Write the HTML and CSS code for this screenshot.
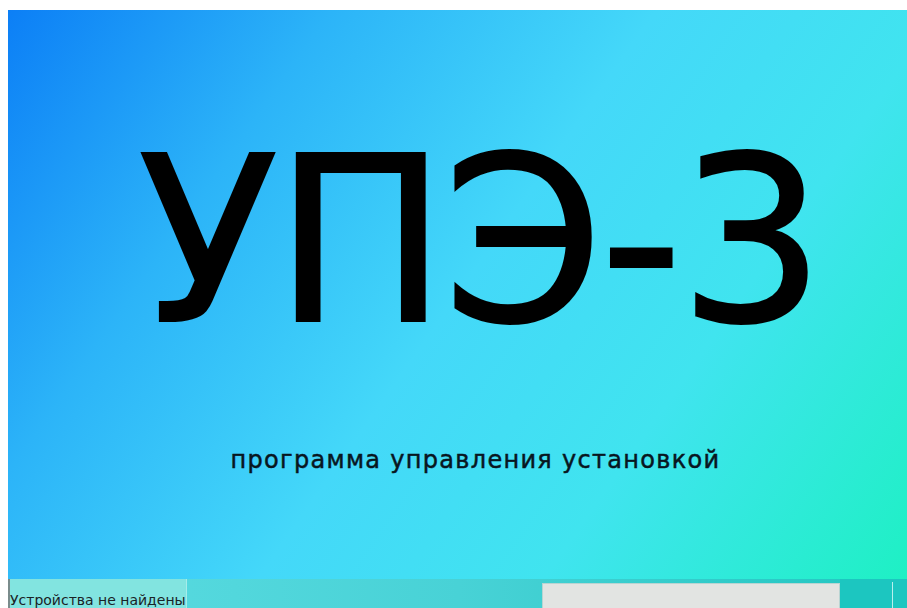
FILE: index.html
```html
<!DOCTYPE html>
<html lang="ru">
<head>
<meta charset="utf-8">
<title>УПЭ-3</title>
<link rel="stylesheet" href="styles.css">
</head>
<body>
<div class="window">
  <main class="splash">
    <h1 class="title">УПЭ-3</h1>
    <p class="subtitle">программа управления установкой</p>
  </main>
  <footer class="statusbar">
    <div class="status-label">Устройства не найдены</div>
    <div class="status-fill"></div>
    <div class="progress"></div>
    <div class="status-end"><span class="grip"></span></div>
  </footer>
</div>
</body>
</html>
```
FILE: styles.css
```css
html, body {
  margin: 0;
  padding: 0;
  background: #ffffff;
  overflow: hidden;
}

body {
  padding: 10px 0 0 8px;
  height: 608px;
  box-sizing: border-box;
}

.window {
  height: 598px;
  display: flex;
  flex-direction: column;
  overflow: hidden;
  font-family: "DejaVu Sans", "Liberation Sans", sans-serif;
}

.splash {
  flex: 0 0 569px;
  display: flex;
  flex-direction: column;
  align-items: center;
  background:
    linear-gradient(125deg, #0c7ff6 0%, #2cb4f8 25%, #44d8f9 50%, #40e4ef 72%, #1ef0c4 100%);
}

.title {
  margin: 117px 0 0 44px;
  font-weight: normal;
  font-size: 230px;
  line-height: 1;
  letter-spacing: -4px;
  color: #000;
  -webkit-text-stroke: 2px #000;
}

.subtitle {
  margin: 89px 0 0 36px;
  font-size: 24px;
  letter-spacing: 1.3px;
  color: #08161f;
  -webkit-text-stroke: 0.5px #08161f;
}

.statusbar {
  flex: 0 0 29px;
  display: flex;
  align-items: stretch;
  background: linear-gradient(90deg, #5cdce2 0%, #48d2d6 50%, #20c6c0 100%);
  border-left: 2px solid #7a8c8c;
}

.status-label {
  width: 177px;
  background: #82e4e0;
  font-family: "DejaVu Sans", sans-serif;
  font-size: 14px;
  color: #1a2226;
  padding-top: 13px;
  box-sizing: border-box;
  white-space: nowrap;
  overflow: hidden;
  border-right: 1px solid #a6ecea;
}

.status-fill {
  flex: 1;
}

.progress {
  width: 296px;
  margin-top: 4px;
  background: #e2e4e2;
  border: 1px solid #b8d4d2;
  border-bottom: none;
}

.status-end {
  width: 67px;
  box-sizing: border-box;
  background: #1cc6c0;
  display: flex;
  justify-content: flex-end;
  padding-right: 14px;
}

.grip {
  width: 1px;
  background: #b8f0ee;
  margin-top: 3px;
}
```
